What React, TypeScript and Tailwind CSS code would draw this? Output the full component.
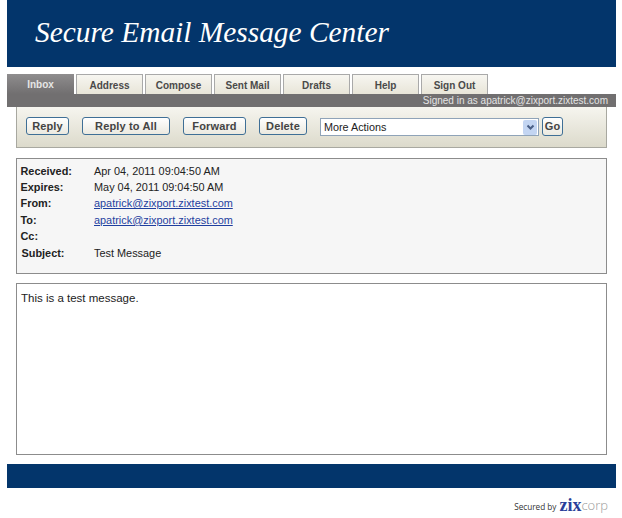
const tabs = ["Inbox", "Address", "Compose", "Sent Mail", "Drafts", "Help", "Sign Out"];

const details = [
    { label: "Received:", value: "Apr 04, 2011 09:04:50 AM" },
    { label: "Expires:", value: "May 04, 2011 09:04:50 AM" },
    { label: "From:", value: "apatrick@zixport.zixtest.com", link: true },
    { label: "To:", value: "apatrick@zixport.zixtest.com", link: true },
    { label: "Cc:", value: "" },
    { label: "Subject:", value: "Test Message" },
];

function ActionButton({ label, className }: { label: string; className: string }) {
    return (
        <button className={`h-[18px] rounded-[3px] border border-[#3f6f96] bg-gradient-to-b from-white to-[#ebe9e0] text-center text-[11px] font-bold leading-[15px] tracking-[0.15px] text-[#444] ${className}`}>
            {label}
        </button>
    );
}

export default function App() {
    return (
        <div className="h-[518px] w-[622px] overflow-hidden bg-white font-['Liberation_Sans',Arial,sans-serif]">
            <div className="ml-[7px] w-[609px]">
                {/* Header */}
                <div className="h-[67px] bg-[#03356b] pl-[28px] pt-[12px] font-['Liberation_Serif',serif] text-[29.4px] italic leading-[40px] text-white">
                    Secure Email Message Center
                </div>

                {/* Tabs */}
                <div className="mt-[7px] flex h-[20px] items-stretch gap-[2px]">
                    {tabs.map((tab, i) => (
                        <div
                            key={tab}
                            className={
                                i === 0
                                    ? "w-[67px] bg-gradient-to-b from-[#8f8d8e] to-[#716f70] pt-[4px] text-center text-[10px] font-bold leading-[13px] text-[#e6e6e6]"
                                    : "w-[67px] border border-b-0 border-[#a9a9a9] bg-gradient-to-b from-[#f7f6f1] to-[#e8e5d8] pt-[4px] text-center text-[10px] font-bold leading-[13px] text-[#4a4a4a]"
                            }
                        >
                            {tab}
                        </div>
                    ))}
                </div>

                {/* Signed in bar */}
                <div className="h-[13px] bg-[#716f70] pr-[8px] text-right text-[10px] leading-[13px] text-[#e4e4e4]">
                    Signed in as apatrick@zixport.zixtest.com
                </div>

                <div className="pl-[9px] pr-[9px]">
                    {/* Toolbar */}
                    <div className="flex h-[41px] items-start border-x border-b border-[#a8a8a0] bg-gradient-to-b from-[#f6f5ef] to-[#dcdacb] pl-[9px] pt-[10px]">
                        <ActionButton label="Reply" className="w-[43px]" />
                        <ActionButton label="Reply to All" className="ml-[13px] w-[88px]" />
                        <ActionButton label="Forward" className="ml-[13px] w-[63px]" />
                        <ActionButton label="Delete" className="ml-[13px] w-[48px]" />
                        <div className="ml-[13px] mt-px flex h-[18px] w-[219px] items-center justify-between border border-[#8fa3b8] bg-white pl-[3px] pr-px text-[10.8px] text-[#222]">
                            More Actions
                            <span className="flex h-[15px] w-[14px] items-center justify-center rounded-[2px] bg-[#c3d5f2]">
                                <svg width="9" height="7" viewBox="0 0 9 7">
                                    <path d="M1.5 1.5 L4.5 4.5 L7.5 1.5" fill="none" stroke="#4a5f86" strokeWidth="2" />
                                </svg>
                            </span>
                        </div>
                        <ActionButton label="Go" className="ml-[3px] h-[19px] w-[21px]" />
                    </div>

                    {/* Message details */}
                    <div className="mt-[10px] h-[116px] border border-[#8c8c8c] bg-[#f6f6f6] pl-[3.5px] pt-[3.6px] text-[10.9px] leading-[16.4px] text-[#222]">
                        {details.map((row) => (
                            <div key={row.label} className="flex h-[16.4px]">
                                <span className={row.label === "Subject:" ? "w-[73.5px] pl-px font-bold" : "w-[73.5px] font-bold"}>{row.label}</span>
                                {row.link ? (
                                    <a className="text-[#1f3f9f] underline">{row.value}</a>
                                ) : (
                                    <span>{row.value}</span>
                                )}
                            </div>
                        ))}
                    </div>

                    {/* Message body */}
                    <div className="mt-[9px] h-[172px] border border-[#8c8c8c] bg-white pl-[4px] pt-[7px] text-[11.5px] leading-[15px] text-[#222]">
                        This is a test message.
                    </div>
                </div>

                {/* Footer bar */}
                <div className="mt-[9px] h-[24px] bg-[#03356b]" />

                {/* Secured by */}
                <div className="mt-[6px] flex h-[20px] items-end justify-end pr-[8px]">
                    <span className="mb-px mr-[3px] font-['Open_Sans',sans-serif] text-[8.2px] leading-[12px] text-[#333]">Secured by</span>
                    <span className="font-['Liberation_Serif',serif] text-[18px] font-bold leading-[18px] text-[#2a3f9a]">zix</span>
                    <span className="font-['Open_Sans',sans-serif] text-[13px] font-light leading-[18px] text-[#9a9a9a]">corp</span>
                </div>
            </div>
        </div>
    );
}
